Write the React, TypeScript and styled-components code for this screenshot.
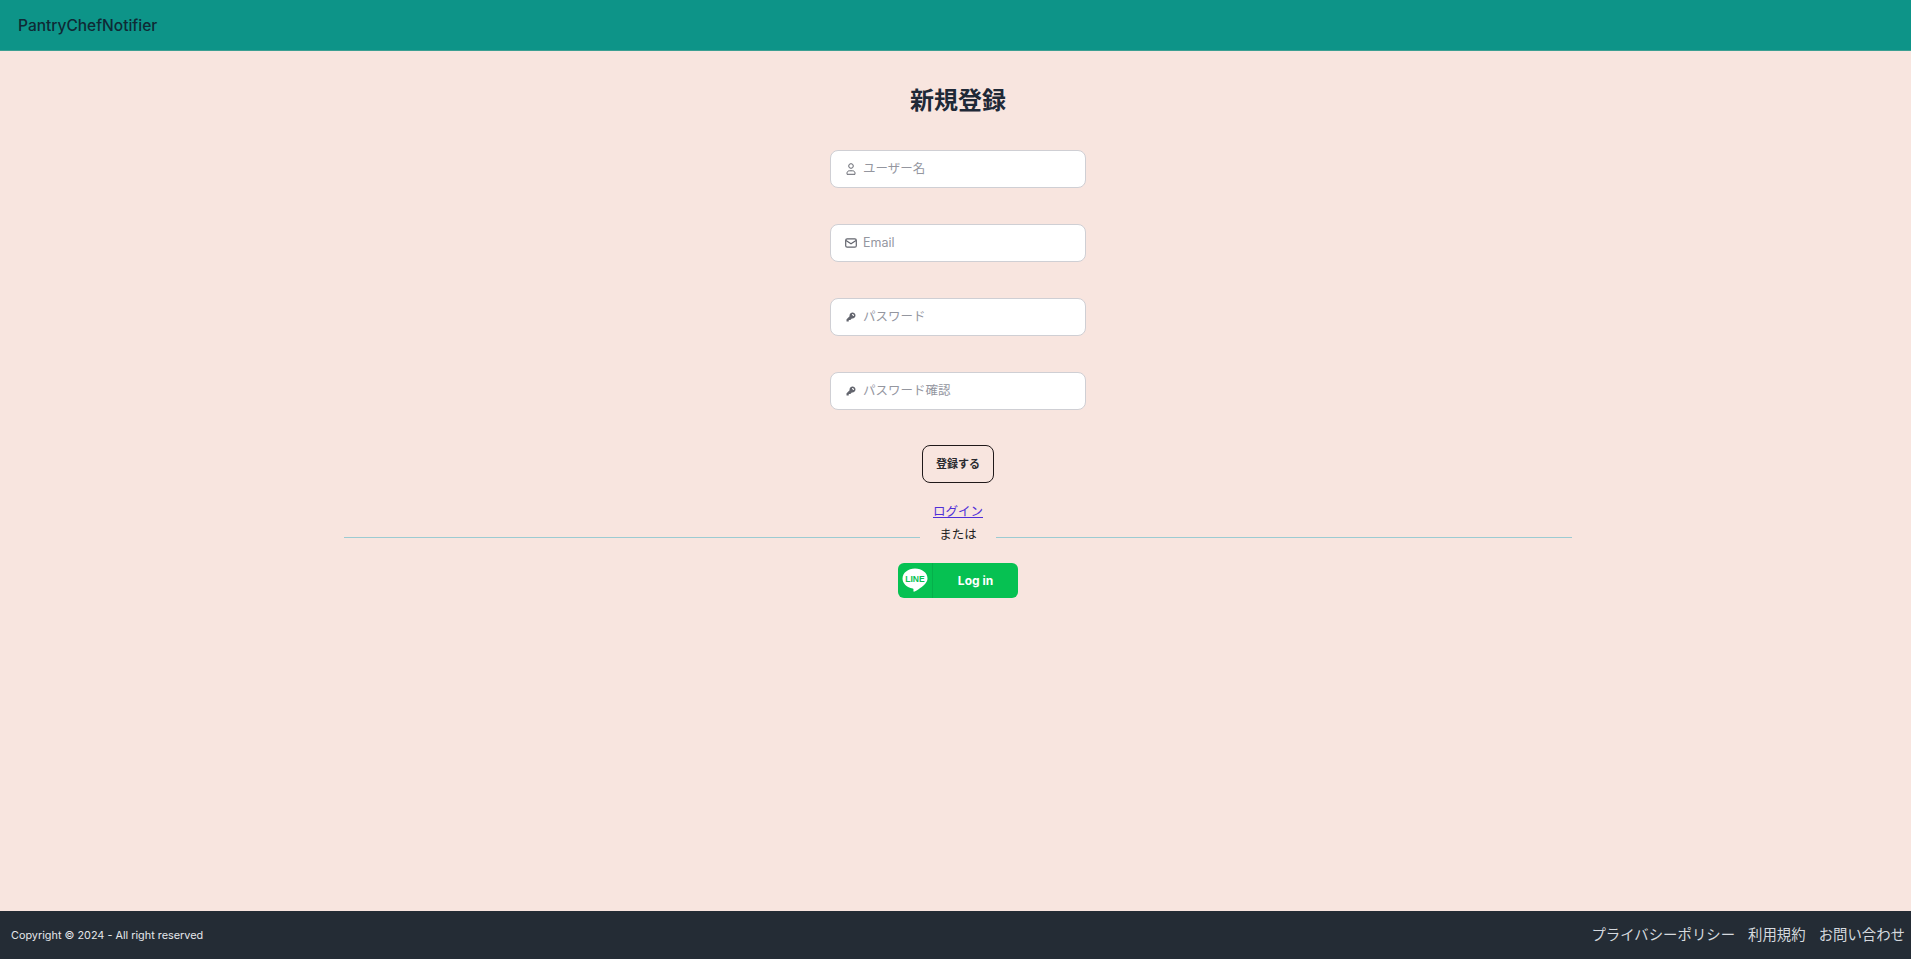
import React from 'react';
import styled, { createGlobalStyle } from 'styled-components';

const LATIN = '"Inter", "Noto Sans CJK JP", sans-serif';

const GlobalStyle = createGlobalStyle`
    html, body {
        margin: 0;
        padding: 0;
    }
    body {
        font-family: ${LATIN};
        background: #f8e5df;
    }
`;

const Page = styled.div`
    display: flex;
    flex-direction: column;
    height: 959px;
    overflow: hidden;
    background: #f8e5df;
`;

const Header = styled.header`
    flex: none;
    display: flex;
    align-items: center;
    height: 50px;
    padding: 0 18px;
    background: #0d9488;
    border-bottom: 1px solid #3b9f92;
`;

const Brand = styled.a`
    margin-top: 1px;
    color: #0f2a35;
    font-size: 15.5px;
    font-weight: 500;
    line-height: 1;
`;

const Main = styled.main`
    flex: 1;
    display: flex;
    flex-direction: column;
    align-items: center;
    padding: 0 0 0 5px;
`;

const Title = styled.h1`
    margin: 33px 0 0;
    height: 34px;
    color: #1f2937;
    font-size: 24px;
    font-weight: 700;
    line-height: 34px;
`;

const Form = styled.form`
    display: flex;
    flex-direction: column;
    align-items: center;
    gap: 36px;
    margin-top: 32px;
`;

const Field = styled.label`
    box-sizing: border-box;
    display: flex;
    align-items: center;
    gap: 6px;
    width: 256px;
    height: 38px;
    padding: 0 14px;
    background: #fff;
    border: 1px solid #cfcfd4;
    border-radius: 8px;
`;

const FieldIcon = styled.svg`
    flex: none;
    width: 12px;
    height: 12px;
    margin-bottom: 1px;
    color: #63656e;
`;

const Input = styled.input`
    flex: 1;
    min-width: 0;
    height: 18px;
    padding: 0;
    margin-top: -1px;
    border: 0;
    outline: 0;
    background: transparent;
    font-family: ${LATIN};
    font-size: 12.5px;
    color: #1f2937;

    &::placeholder {
        color: #94969f;
        opacity: 1;
    }
`;

const SubmitButton = styled.button`
    box-sizing: border-box;
    width: 72px;
    height: 38px;
    margin-top: -1px;
    padding: 0 0 2px;
    background: transparent;
    border: 1px solid #20191a;
    border-radius: 8px;
    color: #2a2a2e;
    font-family: ${LATIN};
    font-size: 11px;
    font-weight: 700;
`;

const LoginLink = styled.a`
    margin-top: 20px;
    color: #4f2fd8;
    font-size: 12.5px;
    line-height: 18px;
    text-decoration: underline;
`;

const Divider = styled.div`
    display: flex;
    align-items: center;
    gap: 19px;
    width: 1228px;
    height: 18px;
    margin-top: 5px;
    color: #1f1f22;
    font-size: 12.5px;
    line-height: 18px;

    &::before,
    &::after {
        content: '';
        flex: 1;
        height: 1px;
        margin-top: 5px;
        background: #9ccbd2;
    }
`;

const LineButton = styled.button`
    display: flex;
    align-items: stretch;
    width: 120px;
    height: 35px;
    margin-top: 19px;
    padding: 0;
    background: #06c152;
    border: 0;
    border-radius: 6px;
    color: #fff;
    font-family: ${LATIN};
    font-size: 12px;
    font-weight: 700;
`;

const LineMark = styled.span`
    flex: none;
    display: flex;
    align-items: center;
    justify-content: center;
    width: 34px;
    border-right: 1px solid #05b04b;
`;

const LineLabel = styled.span`
    flex: 1;
    align-self: center;
`;

const Footer = styled.footer`
    flex: none;
    display: flex;
    align-items: center;
    justify-content: space-between;
    height: 48px;
    padding: 0 6px 0 11px;
    background: #242c35;
    color: #e4e7eb;
`;

const Copyright = styled.p`
    margin: 0;
    font-size: 10.85px;
`;

const FooterNav = styled.nav`
    display: flex;
    gap: 13px;
    margin-top: -3px;
    font-size: 14.4px;
`;

const FooterLink = styled.a`
    color: #d5d9de;
`;

const UserIcon = () => (
    <FieldIcon viewBox="0 0 12 12" fill="none" stroke="currentColor" strokeWidth="1">
        <circle cx="6" cy="3" r="2.300" />
        <path d="M2 11.300h8v-1c0-1.500-1-2.500-2.400-2.500H4.400C3 7.800 2 8.800 2 10.300Z" />
    </FieldIcon>
);

const MailIcon = () => (
    <FieldIcon viewBox="0 0 12 12" fill="none" stroke="currentColor" strokeWidth="1.200">
        <rect x="0.700" y="1.800" width="10.600" height="8.400" rx="1.500" />
        <path d="M1 3.500 6 6.800l5-3.300" />
    </FieldIcon>
);

const KeyIcon = () => (
    <FieldIcon viewBox="0 0 16 16" fill="currentColor">
        <path
            fillRule="evenodd"
            clipRule="evenodd"
            d="M14 6a4 4 0 0 1-4.899 3.899l-1.955 1.955a.5.5 0 0 1-.353.146H5v1.500a.5.5 0 0 1-.5.5h-2a.5.5 0 0 1-.5-.5v-2.293a.5.5 0 0 1 .146-.353l3.955-3.955A4 4 0 1 1 14 6Zm-4-2a.75.75 0 0 0 0 1.500.5.5 0 0 1 .5.5.75.75 0 0 0 1.500 0 2 2 0 0 0-2-2Z"
        />
    </FieldIcon>
);

const LineBubble = () => (
    <svg width="26" height="25" viewBox="0 0 26 25">
        <path
            fill="#fff"
            d="M13 0.500C6 0.500 0.500 4.900 0.500 10.500c0 5 4.300 9.100 10.200 9.900.9.200.9 1.200.7 2.300-.1.800.4 1.200 1.200.8 2.600-1.300 8.600-5.200 11-8.300 1.200-1.500 1.900-3 1.900-4.700C25.500 4.900 20 0.500 13 0.500Z"
        />
        <text
            x="13"
            y="13.500"
            textAnchor="middle"
            fill="#06c152"
            fontFamily='"Liberation Sans", sans-serif'
            fontSize="8.500"
            fontWeight="700"
        >
            LINE
        </text>
    </svg>
);

const App = () => (
    <>
        <GlobalStyle />
        <Page>
            <Header>
                <Brand>PantryChefNotifier</Brand>
            </Header>
            <Main>
                <Title>新規登録</Title>
                <Form>
                    <Field>
                        <UserIcon />
                        <Input placeholder="ユーザー名" />
                    </Field>
                    <Field>
                        <MailIcon />
                        <Input placeholder="Email" />
                    </Field>
                    <Field>
                        <KeyIcon />
                        <Input type="password" placeholder="パスワード" />
                    </Field>
                    <Field>
                        <KeyIcon />
                        <Input type="password" placeholder="パスワード確認" />
                    </Field>
                    <SubmitButton type="button">登録する</SubmitButton>
                </Form>
                <LoginLink href="#">ログイン</LoginLink>
                <Divider>または</Divider>
                <LineButton type="button">
                    <LineMark>
                        <LineBubble />
                    </LineMark>
                    <LineLabel>Log in</LineLabel>
                </LineButton>
            </Main>
            <Footer>
                <Copyright>Copyright © 2024 - All right reserved</Copyright>
                <FooterNav>
                    <FooterLink>プライバシーポリシー</FooterLink>
                    <FooterLink>利用規約</FooterLink>
                    <FooterLink>お問い合わせ</FooterLink>
                </FooterNav>
            </Footer>
        </Page>
    </>
);

export default App;
